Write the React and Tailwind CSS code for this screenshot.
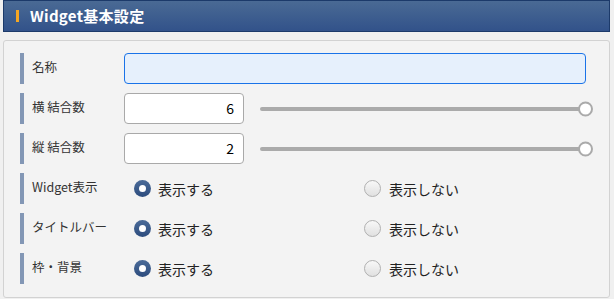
import React, { useState } from "react";

const font = { fontFamily: '"Noto Sans CJK JP", "Noto Sans", sans-serif' };

const Label = ({ children }) => (
  <div className="flex h-full w-[104px] shrink-0">
    <div className="w-[4px] h-full bg-[#8397b5]" />
    <span className="ml-[8px] pt-[6px] text-[12.5px] leading-[16px] text-[#333]">
      {children}
    </span>
  </div>
);

const Slider = () => (
  <div className="relative ml-[16px] flex-1 h-full flex items-center pr-[7px]">
    <div className="w-full h-[4px] rounded-full bg-[#aaaaaa]" />
    <div className="absolute right-0 top-1/2 -translate-y-1/2 w-[15px] h-[15px] rounded-full border-2 border-[#aaaaaa] bg-white" />
  </div>
);

const Radio = ({ checked, label }) => (
  <div className="flex items-center">
    {checked ? (
      <span className="w-[17px] h-[17px] rounded-full bg-gradient-to-b from-[#4b6b98] to-[#2c4c7e] flex items-center justify-center">
        <span className="w-[7px] h-[7px] rounded-full bg-white" />
      </span>
    ) : (
      <span className="w-[17px] h-[17px] rounded-full border border-[#b0b0b0] bg-gradient-to-b from-[#f8f8f8] to-[#e0e0e0]" />
    )}
    <span className={`${checked ? "ml-[7px]" : "ml-[8px]"} text-[14px] leading-[18px] text-[#222]`}>
      {label}
    </span>
  </div>
);

const RadioRow = ({ label }) => (
  <div className="flex h-[31px]">
    <Label>{label}</Label>
    <div className="flex items-center pl-[10px]">
      <div className="w-[230px]">
        <Radio checked label="表示する" />
      </div>
      <Radio label="表示しない" />
    </div>
  </div>
);

export default function App() {
  const [name, setName] = useState("");

  return (
    <div className="w-[614px] h-[299px] bg-[#f0f0f0] pl-[3px] pr-[4px]" style={font}>
      {/* Header */}
      <div className="h-[32px] border border-[#1c3a6a] bg-gradient-to-b from-[#4a6a94] to-[#32528a] flex items-center pl-[12px]">
        <div className="w-[3px] h-[12px] bg-[#f5a623]" />
        <span className="ml-[11px] text-[15px] font-bold text-white tracking-[0.3px]">
          Widget基本設定
        </span>
      </div>

      {/* Panel */}
      <div className="mt-[8px] h-[258px] border border-[#d2d2d2] rounded-[3px] bg-[#f3f3f3] pt-[12px] pl-[16px] pr-[16px] flex flex-col gap-[9px]">
        <div className="flex h-[31px] pr-[7px]">
          <Label>名称</Label>
          <input
            value={name}
            onChange={(e) => setName(e.target.value)}
            className="flex-1 h-full rounded-[4px] border border-[#1a73e8] bg-[#e6f0fc] px-2 text-[14px] outline-none"
          />
        </div>

        <div className="flex h-[31px]">
          <Label>横 結合数</Label>
          <div className="w-[120px] h-full rounded-[4px] border border-[#a9a9a9] bg-white flex items-center justify-end pr-[9px] text-[14px] text-black">
            6
          </div>
          <Slider />
        </div>

        <div className="flex h-[31px]">
          <Label>縦 結合数</Label>
          <div className="w-[120px] h-full rounded-[4px] border border-[#a9a9a9] bg-white flex items-center justify-end pr-[9px] text-[14px] text-black">
            2
          </div>
          <Slider />
        </div>

        <RadioRow label="Widget表示" />
        <RadioRow label="タイトルバー" />
        <RadioRow label="枠・背景" />
      </div>
    </div>
  );
}
